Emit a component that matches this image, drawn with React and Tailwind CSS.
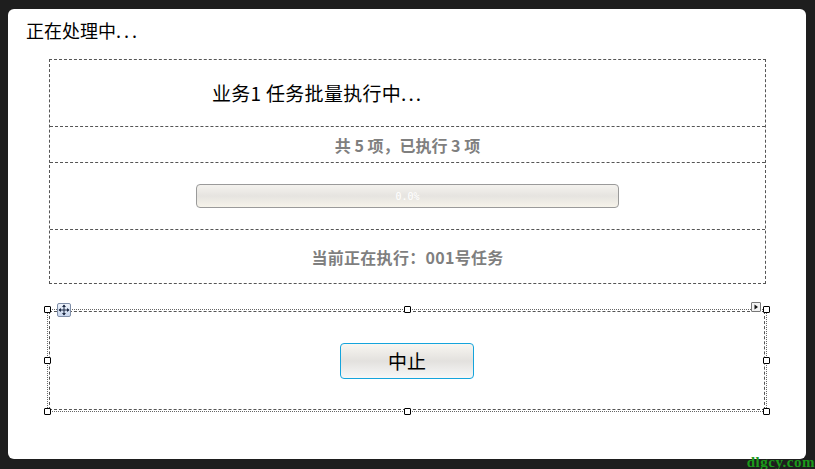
import React from "react";

const font = { fontFamily: '"Noto Sans CJK SC", "Noto Sans", sans-serif' };

function Handle({ className }) {
  return (
    <div
      className={`absolute w-[7px] h-[7px] bg-white border border-black rounded-[1px] ${className}`}
    />
  );
}

function App() {
  const done = 0;
  return (
    <div
      className="w-[815px] h-[469px] bg-[#1e1e1e] pt-[9px] pl-[8px] pr-[9px] pb-[10px] relative"
      style={font}
    >
      <div className="bg-white w-full h-full rounded-[6px] flex flex-col">
        <div className="pl-[18px] pt-[8px] h-[50px] text-[18px] leading-[26px] text-black">
          正在处理中<span className="tracking-[3px]">...</span>
        </div>

        <div className="ml-[41px] w-[717px] border border-dashed border-[#555] flex flex-col">
          <div className="h-[67px] border-b border-dashed border-[#555] flex items-center pl-[162px] text-[19px] text-black tracking-[0.3px]">
            业务1 任务批量执行中<span className="tracking-[2px]">...</span>
          </div>
          <div className="h-[36px] border-b border-dashed border-[#555] flex items-center justify-center text-[16px] font-bold text-[#7f7f7f]">
            共 5 项，已执行 3 项
          </div>
          <div className="h-[67px] border-b border-dashed border-[#555] flex items-center justify-center">
            <div className="relative w-[423px] h-[24px] rounded-[4px] border border-[#9a9a9a] bg-gradient-to-b from-[#f4f2ee] via-[#e6e4e0] to-[#f6f3ea] flex items-center justify-center">
              <div
                className="absolute left-0 top-0 h-full bg-[#3c9ad8] rounded-[3px]"
                style={{ width: `${done}%` }}
              />
              <span
                className="relative text-[10px] text-white"
                style={{ fontFamily: '"DejaVu Sans Mono", monospace' }}
              >
                0.0%
              </span>
            </div>
          </div>
          <div className="h-[53px] flex items-center justify-center text-[16px] font-bold text-[#7f7f7f] tracking-[0.3px]">
            当前正在执行：001号任务
          </div>
        </div>

        <div className="relative mt-[25px] ml-[39px] w-[720px] h-[103px]">
          <div className="absolute inset-0 border border-dotted border-[#666]" />
          <div className="absolute inset-[2px] border border-dashed border-[#555] flex items-center justify-center">
            <button className="w-[134px] h-[36px] rounded-[4px] border border-[#15a4dc] bg-gradient-to-b from-[#f8f6f1] via-[#e3e1de] to-[#f7f7f7] text-[19px] text-black leading-none">
              中止
            </button>
          </div>
          <Handle className="-left-[3px] -top-[3px]" />
          <Handle className="left-[357px] -top-[3px]" />
          <Handle className="-right-[3px] -top-[3px]" />
          <Handle className="-left-[3px] top-[48px]" />
          <Handle className="-right-[3px] top-[48px]" />
          <Handle className="-left-[3px] -bottom-[3px]" />
          <Handle className="left-[357px] -bottom-[3px]" />
          <Handle className="-right-[3px] -bottom-[3px]" />
          <div className="absolute left-[10px] -top-[6px] w-[14px] h-[14px] rounded-[2px] border border-[#7f8ea8] bg-gradient-to-b from-[#eef3fb] to-[#c9d7ee] flex items-center justify-center">
            <svg width="12" height="12" viewBox="0 0 12 12">
              <path d="M6 1v10M1 6h10" stroke="#1d2a44" strokeWidth="1" />
              <path d="M6 0.5L4 3h4zM6 11.5L4 9h4zM0.5 6L3 4v4zM11.5 6L9 4v4z" fill="#1d2a44" />
            </svg>
          </div>
          <div className="absolute right-[6px] -top-[7px] w-[10px] h-[10px] border border-[#777] bg-[#f2f2f2] rounded-[1px] flex items-center justify-center">
            <svg width="6" height="6" viewBox="0 0 6 6">
              <path d="M1.5 0.5L5 3 1.5 5.5z" fill="#111" />
            </svg>
          </div>
        </div>
      </div>
      <div
        className="absolute right-[0px] bottom-[-4px] text-[15px] font-bold text-[#1a9a1a] tracking-[0.5px]"
        style={{ fontFamily: '"Liberation Serif", serif' }}
      >
        dlgcy.com
      </div>
    </div>
  );
}

export default App;
